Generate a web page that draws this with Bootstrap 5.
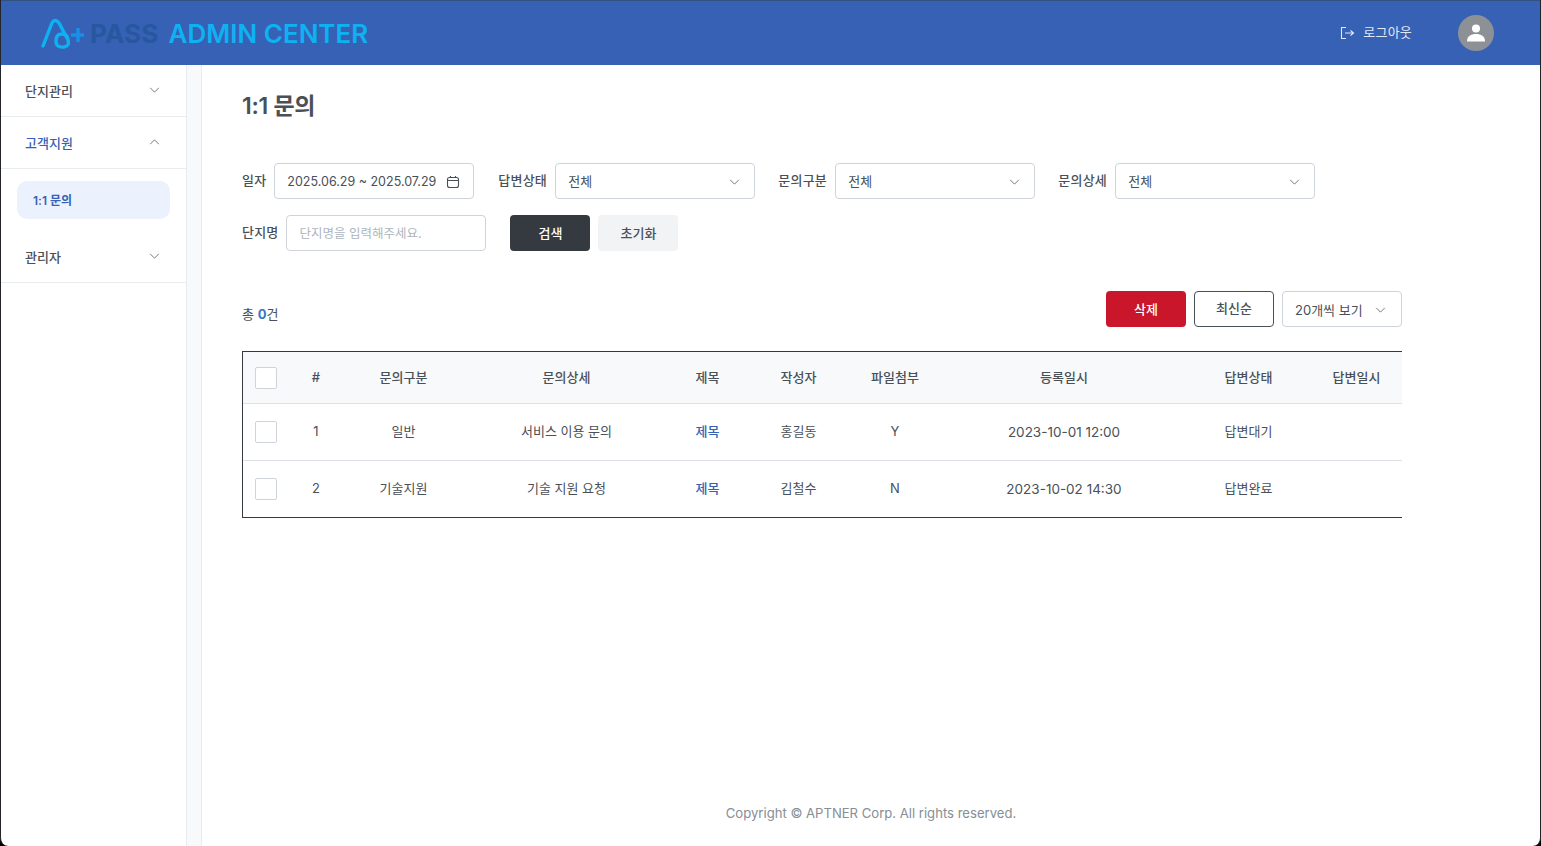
<!DOCTYPE html>
<html lang="ko">
<head>
  <meta charset="UTF-8" />
  <meta name="viewport" content="width=device-width, initial-scale=1.0" />
  <title>1:1 문의 - PASS ADMIN CENTER</title>
  <link href="https://cdn.jsdelivr.net/npm/bootstrap@5.3.3/dist/css/bootstrap.min.css" rel="stylesheet" />
  <style>
    html, body { height: 100%; }
    body {
      font-family: Inter, "Noto Sans CJK KR", sans-serif;
      font-size: 13px;
      color: #495057;
      background: #000;
      overflow: hidden;
    }
    .app-frame {
      height: 846px;
      display: flex;
      flex-direction: column;
      background: #fff;
      border-left: 1px solid #212529;
      border-right: 1px solid #212529;
      border-radius: 0 0 8px 8px;
      overflow: hidden;
    }
    .top-bar {
      height: 65px;
      flex: none;
      background: #3661b5;
      border-top: 1px solid #34507f;
      padding: 0 46px 0 39px;
    }
    .logo-pass { font-size: 26px; font-weight: 700; color: #27589f; letter-spacing: .2px; }
    .logo-admin { font-size: 26px; font-weight: 600; color: #0eb2f2; margin-left: 10px; }
    .logout-link { color: #e2e8f4; font-size: 13px; letter-spacing: .2px; gap: 8px; margin-right: 46px; }
    .avatar-circle { width: 36px; height: 36px; border-radius: 50%; background: #8d9196; }
    .shell-row { min-height: 0; }
    .side-menu { width: 186px; flex: none; border-right: 1px solid #e9ecef; }
    .side-gap { width: 15px; flex: none; background: #f8f9fa; border-right: 1px solid #e9ecef; }
    .menu-row {
      height: 52px;
      padding: 2px 26px 0 24px;
      border-bottom: 1px solid #e9ecef;
      font-weight: 500;
      color: #495057;
    }
    .menu-row svg { margin-top: -3px; }
    .menu-row.is-open { color: #3661b5; }
    .sub-wrap { height: 62px; padding: 12px 16px; border: 0; }
    .sub-item {
      height: 38px;
      padding: 2px 16px 0;
      border-radius: 10px;
      background: #ebf2fe;
      color: #3661b5;
      font-size: 12px;
      font-weight: 600;
    }
    .page-body { padding: 0 138px 0 40px; min-width: 0; }
    .page-title { font-size: 23px; font-weight: 600; color: #495057; margin: 25px 0 41px; line-height: 32px; letter-spacing: -.3px; }
    .filter-line { height: 36px; margin-bottom: 16px; }
    .field-label { font-weight: 500; color: #495057; margin-right: 8px; letter-spacing: .2px; white-space: nowrap; }
    .label-wide { width: 49px; flex: none; }
    .field-box {
      width: 200px;
      height: 36px;
      flex: none;
      padding: 2px 14px 0 12px;
      background: #fff;
      border: 1px solid #ced4da;
      border-radius: 4px;
      color: #495057;
      font-size: 13px;
    }
    .field-gap { margin-right: 23px; }
    .date-box { font-size: 12.5px; padding-right: 13px; margin-right: 24px; }
    input.field-box { padding-top: 0; }
    .field-box::placeholder { color: #adb5bd; font-size: 12.5px; }
    .act-btn {
      width: 80px;
      height: 36px;
      padding: 2px 0 0;
      font-size: 13px;
      font-weight: 500;
      border-radius: 4px;
    }
    .act-dark { background: #343a40; color: #fff; border: 0; margin-left: 24px; }
    .act-light { background: #f1f3f5; color: #495057; border: 0; margin-left: 8px; }
    .act-red { background: #c9162b; color: #fff; border: 0; }
    .act-line { background: #fff; color: #495057; border: 1px solid #495057; padding-top: 0; }
    .count-line { margin-top: 24px; height: 36px; }
    .count-text { font-size: 13px; color: #495057; padding-top: 14px; }
    .count-num { color: #3678c4; font-weight: 700; }
    .per-page { width: 120px; padding: 3px 15px 0 12px; }
    .per-page svg { margin-top: -2px; }
    .list-table {
      width: 1160px;
      margin-top: 24px;
      table-layout: fixed;
      border-top: 1px solid #343a40;
      border-bottom: 1px solid #343a40;
      border-left: 1px solid #343a40;
      border-collapse: separate;
      border-spacing: 0;
      margin-bottom: 0;
    }
    .list-table col:nth-child(1) { width: 46px; }
    .list-table col:nth-child(2) { width: 54px; }
    .list-table col:nth-child(3) { width: 121px; }
    .list-table col:nth-child(4) { width: 205px; }
    .list-table col:nth-child(5) { width: 77px; }
    .list-table col:nth-child(6) { width: 105px; }
    .list-table col:nth-child(7) { width: 88px; }
    .list-table col:nth-child(8) { width: 250px; }
    .list-table col:nth-child(9) { width: 119px; }
    .list-table th, .list-table td {
      text-align: center;
      vertical-align: middle;
      padding: 0;
      font-size: 13px;
      color: #495057;
      border-bottom: 1px solid #dee2e6;
      box-shadow: none;
    }
    .list-table th { padding-top: 1px; }
    .list-table th:first-child { padding: 0; }
    .list-table th:last-child { padding-left: 3px; }
    .list-table th { height: 52px; background: #f8f9fa; font-weight: 500; }
    .list-table td { height: 57px; }
    .list-table tr:last-child td { height: 56px; border-bottom: 0; }
    .list-table td a { color: #3661b5; font-weight: 500; text-decoration: none; }
    .list-table td.date-cell { font-size: 13.5px; }
    .tick-box {
      display: block;
      width: 22px;
      height: 22px;
      margin: 0 0 0 12px;
      background: #fff;
      border: 1px solid #ced4da;
      border-radius: 2px;
      appearance: none;
    }
    .page-foot { margin: auto -138px 0 -40px; height: 42px; color: #868e96; font-size: 13.1px; text-align: center; }
  </style>
</head>
<body>
  <div class="app-frame">
    <header class="top-bar d-flex align-items-center justify-content-between">
      <div class="d-flex align-items-center">
        <svg width="50" height="34" viewBox="0 0 50 34" fill="none">
          <path d="M3 30 L12 7 Q15 2 19 7 L28 24 Q30 30 24 31 Q16 32 16 25 Q16 18 22 18 Q27 18 28 23" stroke="#0eb2f2" stroke-width="3.4" stroke-linecap="round"/>
          <path d="M31 19 H44 M38 12 V26" stroke="#1a8fe8" stroke-width="3.5"/>
        </svg>
        <span class="logo-pass">PASS</span>
        <span class="logo-admin">ADMIN CENTER</span>
      </div>
      <div class="d-flex align-items-center">
        <a class="logout-link d-flex align-items-center text-decoration-none" href="#">
          <svg width="15" height="14" viewBox="0 0 15 14" fill="none" stroke="#e2e8f4" stroke-width="1.1">
            <path d="M6 1.5 H1.5 V12.5 H6 M5 7 H13.5 M10.5 4.5 L13.5 7 L10.5 9.5"/>
          </svg>
          로그아웃
        </a>
        <div class="avatar-circle d-flex align-items-center justify-content-center">
          <svg width="20" height="20" viewBox="0 0 20 20" fill="#fff">
            <circle cx="10" cy="5.5" r="4"/>
            <path d="M1 18.5 C1 13 5 11 10 11 C15 11 19 13 19 18.5 Z"/>
          </svg>
        </div>
      </div>
    </header>

    <div class="shell-row d-flex flex-grow-1">
      <nav class="side-menu">
        <div class="menu-row d-flex align-items-center justify-content-between">
          단지관리
          <svg width="11" height="6" viewBox="0 0 12 7" fill="none" stroke="#5c636a"><path d="M1 1 L6 6 L11 1"/></svg>
        </div>
        <div class="menu-row is-open d-flex align-items-center justify-content-between">
          고객지원
          <svg width="11" height="6" viewBox="0 0 12 7" fill="none" stroke="#5c636a"><path d="M1 6 L6 1 L11 6"/></svg>
        </div>
        <div class="sub-wrap">
          <div class="sub-item d-flex align-items-center">1:1 문의</div>
        </div>
        <div class="menu-row d-flex align-items-center justify-content-between">
          관리자
          <svg width="11" height="6" viewBox="0 0 12 7" fill="none" stroke="#5c636a"><path d="M1 1 L6 6 L11 1"/></svg>
        </div>
      </nav>
      <div class="side-gap"></div>

      <main class="page-body flex-grow-1 d-flex flex-column">
        <h1 class="page-title">1:1 문의</h1>

        <div class="filter-line d-flex align-items-center">
          <span class="field-label">일자</span>
          <div class="field-box date-box d-flex align-items-center justify-content-between">
            2025.06.29 ~ 2025.07.29
            <svg width="14" height="14" viewBox="0 0 14 14" fill="none" stroke="#495057" stroke-width="1.1">
              <rect x="1.5" y="2.5" width="11" height="10" rx="2"/>
              <path d="M1.5 5.5 H12.5 M4.5 1 V3 M9.5 1 V3"/>
            </svg>
          </div>
          <span class="field-label label-wide">답변상태</span>
          <div class="field-box field-gap d-flex align-items-center justify-content-between">
            전체
            <svg width="11" height="6" viewBox="0 0 12 7" fill="none" stroke="#5c636a"><path d="M1 1 L6 6 L11 1"/></svg>
          </div>
          <span class="field-label label-wide">문의구분</span>
          <div class="field-box field-gap d-flex align-items-center justify-content-between">
            전체
            <svg width="11" height="6" viewBox="0 0 12 7" fill="none" stroke="#5c636a"><path d="M1 1 L6 6 L11 1"/></svg>
          </div>
          <span class="field-label label-wide">문의상세</span>
          <div class="field-box d-flex align-items-center justify-content-between">
            전체
            <svg width="11" height="6" viewBox="0 0 12 7" fill="none" stroke="#5c636a"><path d="M1 1 L6 6 L11 1"/></svg>
          </div>
        </div>

        <div class="filter-line d-flex align-items-center">
          <span class="field-label">단지명</span>
          <input class="field-box" type="text" placeholder="단지명을 입력해주세요." />
          <button class="btn act-btn act-dark" type="button">검색</button>
          <button class="btn act-btn act-light" type="button">초기화</button>
        </div>

        <div class="count-line d-flex justify-content-between">
          <div class="count-text">총 <span class="count-num">0</span>건</div>
          <div class="d-flex gap-2">
            <button class="btn act-btn act-red" type="button">삭제</button>
            <button class="btn act-btn act-line" type="button">최신순</button>
            <div class="field-box per-page d-flex align-items-center justify-content-between">
              20개씩 보기
              <svg width="11" height="6" viewBox="0 0 12 7" fill="none" stroke="#5c636a"><path d="M1 1 L6 6 L11 1"/></svg>
            </div>
          </div>
        </div>

        <table class="table list-table">
          <colgroup>
            <col /><col /><col /><col /><col /><col /><col /><col /><col /><col />
          </colgroup>
          <thead>
            <tr>
              <th><input class="tick-box" type="checkbox" /></th>
              <th>#</th><th>문의구분</th><th>문의상세</th><th>제목</th>
              <th>작성자</th><th>파일첨부</th><th>등록일시</th><th>답변상태</th><th>답변일시</th>
            </tr>
          </thead>
          <tbody>
            <tr>
              <td><input class="tick-box" type="checkbox" /></td>
              <td>1</td><td>일반</td><td>서비스 이용 문의</td><td><a href="#">제목</a></td>
              <td>홍길동</td><td>Y</td><td class="date-cell">2023-10-01 12:00</td><td>답변대기</td><td></td>
            </tr>
            <tr>
              <td><input class="tick-box" type="checkbox" /></td>
              <td>2</td><td>기술지원</td><td>기술 지원 요청</td><td><a href="#">제목</a></td>
              <td>김철수</td><td>N</td><td class="date-cell">2023-10-02 14:30</td><td>답변완료</td><td></td>
            </tr>
          </tbody>
        </table>

        <footer class="page-foot">Copyright © APTNER Corp. All rights reserved.</footer>
      </main>
    </div>
  </div>

  <script src="https://cdn.jsdelivr.net/npm/bootstrap@5.3.3/dist/js/bootstrap.bundle.min.js"></script>
</body>
</html>
